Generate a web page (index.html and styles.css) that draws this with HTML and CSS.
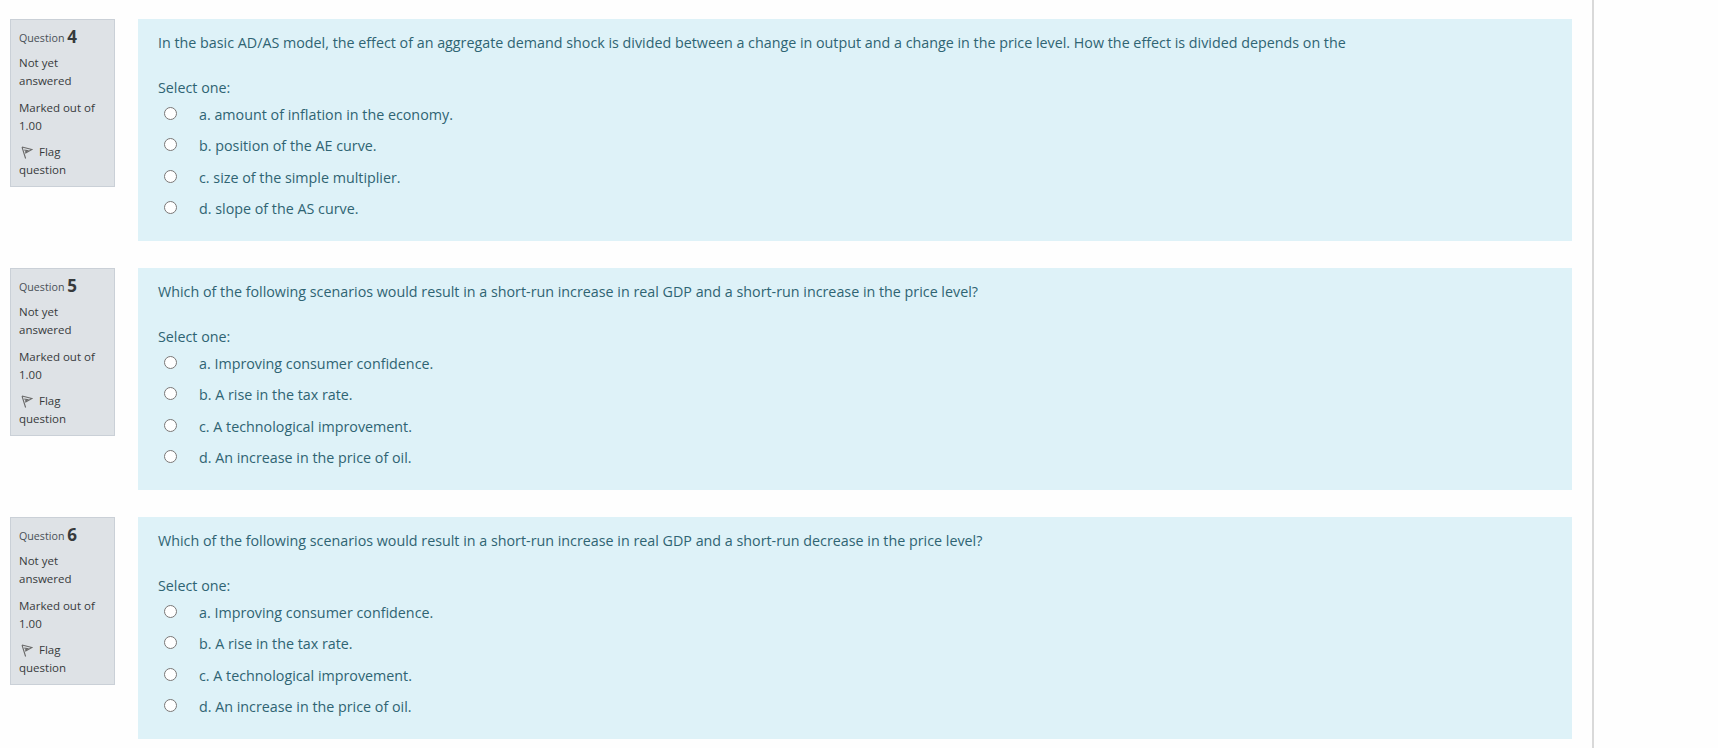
FILE: index.html
```html
<!DOCTYPE html>
<html lang="en">

<head>
    <meta charset="UTF-8">
    <meta name="viewport" content="width=device-width, initial-scale=1.0">
    <title>Quiz - Attempt</title>
    <link rel="stylesheet" href="styles.css">
</head>

<body>
    <div class="page">
        <div class="que">
            <div class="info">
                <h3 class="no">Question <span class="qno">4</span></h3>
                <div class="state">Not yet answered</div>
                <div class="grade">Marked out of 1.00</div>
                <div class="flag">
                    <svg class="flagIcon" viewBox="0 0 12 13"><path d="M1 1L11 3.5L4.2 7.2M1 1L4.6 12.5M3.2 4L6.5 4.6L4.2 6" /></svg>
                    Flag question
                </div>
            </div>
            <div class="formulation">
                <div class="qtext">In the basic AD/AS model, the effect of an aggregate demand shock is divided between a change in output and a change in the price level. How the effect is divided depends on the</div>
                <div class="prompt">Select one:</div>
                <div class="answer">
                    <label class="opt"><input type="radio" name="q4"><span>a. amount of inflation in the economy.</span></label>
                    <label class="opt"><input type="radio" name="q4"><span>b. position of the AE curve.</span></label>
                    <label class="opt"><input type="radio" name="q4"><span>c. size of the simple multiplier.</span></label>
                    <label class="opt"><input type="radio" name="q4"><span>d. slope of the AS curve.</span></label>
                </div>
            </div>
        </div>

        <div class="que">
            <div class="info">
                <h3 class="no">Question <span class="qno">5</span></h3>
                <div class="state">Not yet answered</div>
                <div class="grade">Marked out of 1.00</div>
                <div class="flag">
                    <svg class="flagIcon" viewBox="0 0 12 13"><path d="M1 1L11 3.5L4.2 7.2M1 1L4.6 12.5M3.2 4L6.5 4.6L4.2 6" /></svg>
                    Flag question
                </div>
            </div>
            <div class="formulation">
                <div class="qtext">Which of the following scenarios would result in a short-run increase in real GDP and a short-run increase in the price level?</div>
                <div class="prompt">Select one:</div>
                <div class="answer">
                    <label class="opt"><input type="radio" name="q5"><span>a. Improving consumer confidence.</span></label>
                    <label class="opt"><input type="radio" name="q5"><span>b. A rise in the tax rate.</span></label>
                    <label class="opt"><input type="radio" name="q5"><span>c. A technological improvement.</span></label>
                    <label class="opt"><input type="radio" name="q5"><span>d. An increase in the price of oil.</span></label>
                </div>
            </div>
        </div>

        <div class="que">
            <div class="info">
                <h3 class="no">Question <span class="qno">6</span></h3>
                <div class="state">Not yet answered</div>
                <div class="grade">Marked out of 1.00</div>
                <div class="flag">
                    <svg class="flagIcon" viewBox="0 0 12 13"><path d="M1 1L11 3.5L4.2 7.2M1 1L4.6 12.5M3.2 4L6.5 4.6L4.2 6" /></svg>
                    Flag question
                </div>
            </div>
            <div class="formulation">
                <div class="qtext">Which of the following scenarios would result in a short-run increase in real GDP and a short-run decrease in the price level?</div>
                <div class="prompt">Select one:</div>
                <div class="answer">
                    <label class="opt"><input type="radio" name="q6"><span>a. Improving consumer confidence.</span></label>
                    <label class="opt"><input type="radio" name="q6"><span>b. A rise in the tax rate.</span></label>
                    <label class="opt"><input type="radio" name="q6"><span>c. A technological improvement.</span></label>
                    <label class="opt"><input type="radio" name="q6"><span>d. An increase in the price of oil.</span></label>
                </div>
            </div>
        </div>
    </div>
</body>

</html>
```

FILE: styles.css
```css
html, body {
    margin: 0;
    height: 100%;
    overflow: hidden;
}

body {
    background-color: #fefefe;
    color: #373a3c;
    font-family: "Open Sans", "Noto Sans", sans-serif;
    font-size: 14.3px;
}

.page {
    box-sizing: border-box;
    width: 1594px;
    height: 748px;
    padding: 19px 20px 0 10px;
    border-right: 2px solid #d9d9d9;
}

.que {
    display: flex;
    align-items: flex-start;
    gap: 23px;
    margin-bottom: 27px;
}

.info {
    box-sizing: border-box;
    flex: none;
    width: 105px;
    height: 168px;
    padding: 7px 7px 7px 8px;
    background-color: #dee2e6;
    border: 1px solid #cad0d7;
    font-size: 11.5px;
    line-height: 18px;
}

.no {
    margin: 0 0 7px 0;
    font-size: 10.7px;
    font-weight: normal;
    line-height: 20px;
    height: 20px;
    color: #495057;
}

.qno {
    font-size: 17px;
    font-weight: bold;
    color: #373a3c;
    vertical-align: -1px;
}

.state {
    margin-bottom: 9px;
}

.grade {
    margin-bottom: 8px;
}

.flagIcon {
    width: 12px;
    height: 13px;
    margin: 0 3px 0 2px;
    vertical-align: -3px;
    fill: none;
    stroke: #6a6a6a;
    stroke-width: 1.1;
}

.formulation {
    box-sizing: border-box;
    flex: none;
    width: 1434px;
    height: 222px;
    padding: 13px 20px;
    background-color: #def2f8;
    color: #2f6473;
    line-height: 21px;
}

.qtext {
    margin-bottom: 24px;
}

.answer {
    margin-top: 1px;
}

.opt {
    display: flex;
    align-items: center;
    height: 31.3px;
}

.opt input {
    flex: none;
    width: 13px;
    height: 13px;
    margin: 0 22px 2px 6px;
}
```
